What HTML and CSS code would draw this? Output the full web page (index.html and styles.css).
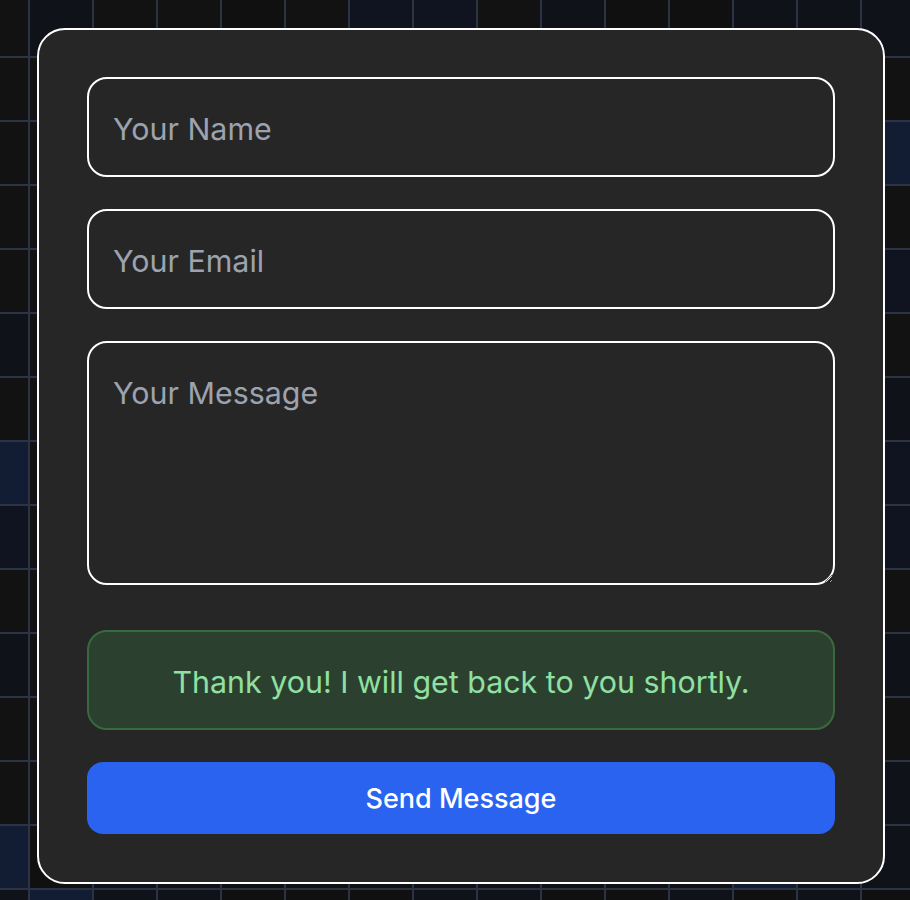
FILE: index.html
```html
<!DOCTYPE html>
<html lang="en">
<head>
<meta charset="utf-8">
<title>Contact</title>
<link rel="stylesheet" href="styles.css">
</head>
<body>
<div class="grid">
<span></span><span class="a"></span><span></span><span></span><span class="d"></span><span></span><span class="b"></span><span class="b"></span><span></span><span class="a"></span><span class="d"></span><span class="d"></span><span class="a"></span><span class="a"></span><span class="a"></span>
<span></span><span></span><span></span><span></span><span></span><span></span><span></span><span></span><span></span><span></span><span></span><span></span><span></span><span></span><span></span>
<span></span><span></span><span></span><span></span><span></span><span></span><span></span><span></span><span></span><span></span><span></span><span></span><span></span><span></span><span class="n"></span>
<span></span><span></span><span></span><span></span><span></span><span></span><span></span><span></span><span></span><span></span><span></span><span></span><span></span><span></span><span></span>
<span></span><span></span><span></span><span></span><span></span><span></span><span></span><span></span><span></span><span></span><span></span><span></span><span></span><span></span><span class="b"></span>
<span class="a"></span><span></span><span></span><span></span><span></span><span></span><span></span><span></span><span></span><span></span><span></span><span></span><span></span><span></span><span></span>
<span></span><span></span><span></span><span></span><span></span><span></span><span></span><span></span><span></span><span></span><span></span><span></span><span></span><span></span><span class="a"></span>
<span class="n"></span><span></span><span></span><span></span><span></span><span></span><span></span><span></span><span></span><span></span><span></span><span></span><span></span><span></span><span class="b"></span>
<span class="b"></span><span></span><span></span><span></span><span></span><span></span><span></span><span></span><span></span><span></span><span></span><span></span><span></span><span></span><span class="b"></span>
<span></span><span></span><span></span><span></span><span></span><span></span><span></span><span></span><span></span><span></span><span></span><span></span><span></span><span></span><span></span>
<span class="a"></span><span></span><span></span><span></span><span></span><span></span><span></span><span></span><span></span><span></span><span></span><span></span><span></span><span></span><span class="a"></span>
<span></span><span></span><span></span><span></span><span></span><span></span><span></span><span></span><span></span><span></span><span></span><span></span><span></span><span></span><span></span>
<span></span><span></span><span></span><span></span><span></span><span></span><span></span><span></span><span></span><span></span><span></span><span></span><span></span><span></span><span class="a"></span>
<span class="n"></span><span class="d"></span><span class="a"></span><span></span><span class="d"></span><span></span><span></span><span></span><span></span><span></span><span></span><span></span><span class="n"></span><span class="a"></span><span class="a"></span>
<span class="a"></span><span class="n"></span><span class="a"></span><span class="a"></span><span class="d"></span><span class="d"></span><span class="d"></span><span class="a"></span><span class="a"></span><span class="d"></span><span class="d"></span><span class="a"></span><span class="d"></span><span class="a"></span><span class="d"></span>
</div>
<form class="card">
  <input class="field" type="text" placeholder="Your Name">
  <input class="field" type="email" placeholder="Your Email">
  <textarea class="field area" rows="4" placeholder="Your Message"></textarea>
  <div class="success">Thank you! I will get back to you shortly.</div>
  <button class="send" type="button">Send Message</button>
</form>
</body>
</html>
```

FILE: styles.css
```css
html, body {
  margin: 0;
  padding: 0;
  background: #121212;
  overflow: hidden;
  height: 900px;
}

body {
  font-family: Inter, "Noto Sans", sans-serif;
}

.grid {
  display: grid;
  grid-template-columns: repeat(15, 62px);
  grid-auto-rows: 62px;
  gap: 2px;
  background: #2b3345;
  margin: -6px 0 0 -34px;
  width: 944px;
  height: 906px;
  overflow: hidden;
}

.grid span {
  display: block;
  background: #121212;
}

.grid .a { background: #10121a; }
.grid .b { background: #0f1420; }
.grid .n { background: #121c33; }
.grid .d { background: #101010; }

.card {
  position: absolute;
  left: 37px;
  top: 28px;
  width: 848px;
  box-sizing: border-box;
  border: 2px solid #ffffff;
  border-radius: 28px;
  background: #262626;
  padding: 47px 48px 48px;
  display: flex;
  flex-direction: column;
  gap: 32px;
  margin: 0;
}

.field {
  display: block;
  box-sizing: border-box;
  width: 100%;
  margin: 0;
  border: 2px solid #ffffff;
  border-radius: 20px;
  background: transparent;
  color: #ffffff;
  padding: 26px 24px 22px;
  font-family: Inter, "Noto Sans", sans-serif;
  font-size: 30.4px;
  line-height: 48px;
  outline: none;
}

.field::placeholder {
  color: #9ca3af;
  opacity: 1;
}

.area {
  height: 244px;
  resize: vertical;
}

.success {
  margin-top: 13px;
  box-sizing: border-box;
  border: 2px solid #386a3e;
  border-radius: 20px;
  background: #2c402f;
  color: #8fe0a2;
  padding: 26px 24px 22px;
  font-size: 30.4px;
  line-height: 48px;
  text-align: center;
}

.send {
  display: block;
  width: 100%;
  border: none;
  border-radius: 16px;
  background: #2963f0;
  color: #ffffff;
  padding: 17px 16px 15px;
  font-family: Inter, "Noto Sans", sans-serif;
  font-size: 27px;
  line-height: 40px;
  font-weight: 500;
  cursor: pointer;
}
```
